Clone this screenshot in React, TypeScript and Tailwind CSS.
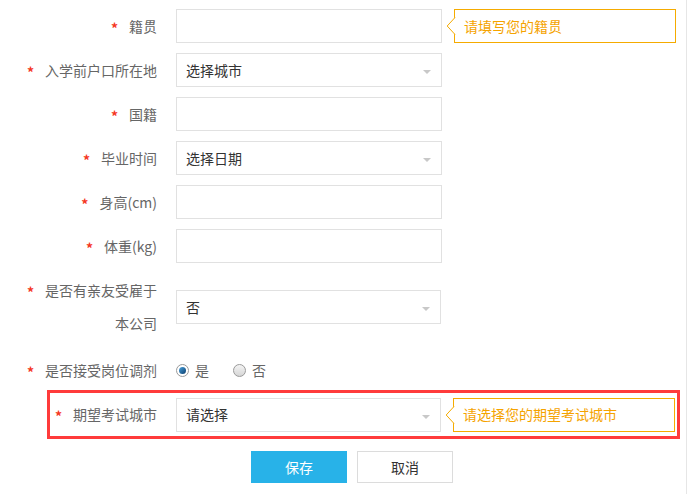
import React from "react";

const font = { fontFamily: '"Noto Sans CJK SC", "Microsoft YaHei", sans-serif' };

function Label({ text, w = "w-[157px]" }: { text: string; w?: string }) {
  return (
    <div className={`${w} shrink-0 flex items-center justify-end text-[14px] text-[#666]`}>
      <span className="text-[#f5371f] font-bold mr-[11px] text-[14px] leading-none mt-[3px]">*</span>
      <span>{text}</span>
    </div>
  );
}

function Arrow() {
  return (
    <svg width="8" height="8" viewBox="0 0 8 8" className="absolute right-[10px] top-[14px]">
      <polygon points="0,2 8,2 4,6" fill="#c8c8c8" />
    </svg>
  );
}

function Input({ value, select, w = "w-[266px]" }: { value?: string; select?: boolean; w?: string }) {
  return (
    <div className={`relative ${w} h-[34px] border border-[#e1e1e1] bg-white flex items-center pl-[9px] text-[14px] text-[#333]`}>
      {value}
      {select && <Arrow />}
    </div>
  );
}

function Tip({ text, w }: { text: string; w: string }) {
  return (
    <div className={`relative ${w} h-[34px] border border-[#f5ab00] bg-white flex items-center pl-[9px] text-[14px] text-[#f5a300]`}>
      <svg width="10" height="18" viewBox="0 0 10 18" className="absolute left-[-9px] top-[7px]">
        <polyline points="9,0.5 1.2,9 9,17.5" fill="white" stroke="#f5ab00" strokeWidth="1" />
      </svg>
      {text}
    </div>
  );
}

function Row({ label, children }: { label: string; children: React.ReactNode }) {
  return (
    <div className="flex items-center h-[34px]">
      <Label text={label} />
      <div className="ml-[19px] flex items-center">{children}</div>
    </div>
  );
}

function Radio({ checked }: { checked?: boolean }) {
  return (
    <span
      className={`inline-block w-[13px] h-[13px] rounded-full border border-[#9a9a9a] ${
        checked ? "bg-white" : "bg-gradient-to-b from-[#f4f4f4] to-[#d6d6d6]"
      } relative`}
    >
      {checked && (
        <span className="absolute left-[2px] top-[2px] w-[7px] h-[7px] rounded-full bg-gradient-to-br from-[#4aa3de] to-[#0b3f6e]" />
      )}
    </span>
  );
}

export default function App() {
  return (
    <div style={font} className="w-[687px] h-[494px] bg-white border-r border-[#e6e6e6] pt-[9px] relative">
      <div className="flex flex-col gap-[10px]">
        <Row label="籍贯">
          <Input />
          <div className="ml-[12px]">
            <Tip text="请填写您的籍贯" w="w-[222px]" />
          </div>
        </Row>
        <Row label="入学前户口所在地">
          <Input value="选择城市" select />
        </Row>
        <Row label="国籍">
          <Input />
        </Row>
        <Row label="毕业时间">
          <Input value="选择日期" select />
        </Row>
        <Row label="身高(cm)">
          <Input />
        </Row>
        <Row label="体重(kg)">
          <Input />
        </Row>
      </div>

      <div className="flex items-center mt-[11px] h-[66px]">
        <div className="w-[157px] shrink-0 text-right text-[14px] text-[#666] leading-[33px]">
          <div className="flex items-center justify-end">
            <span className="text-[#f5371f] font-bold mr-[11px] leading-none mt-[3px]">*</span>
            <span>是否有亲友受雇于</span>
          </div>
          <div>本公司</div>
        </div>
        <div className="ml-[19px]">
          <Input value="否" select w="w-[265px]" />
        </div>
      </div>

      <div className="flex items-center mt-[20px] h-[20px]">
        <Label text="是否接受岗位调剂" />
        <div className="ml-[19px] flex items-center text-[14px] text-[#666]">
          <Radio checked />
          <span className="ml-[6px]">是</span>
          <span className="ml-[24px] flex items-center"><Radio /></span>
          <span className="ml-[6px]">否</span>
        </div>
      </div>

      <div className="ml-[47px] mt-[10px] w-[633px] h-[49px] border-[3px] border-[#ff3b3b] flex items-center">
        <Label text="期望考试城市" w="w-[107px]" />
        <div className="ml-[19px] flex items-center">
          <Input value="请选择" select w="w-[265px]" />
          <div className="ml-[12px]">
            <Tip text="请选择您的期望考试城市" w="w-[222px]" />
          </div>
        </div>
      </div>

      <div className="flex ml-[251px] mt-[12px] gap-[10px]">
        <button className="w-[96px] h-[32px] bg-[#28b2e8] text-white text-[14px]">保存</button>
        <button className="w-[96px] h-[32px] border border-[#dcdcdc] bg-white text-[#333] text-[14px]">取消</button>
      </div>
    </div>
  );
}
